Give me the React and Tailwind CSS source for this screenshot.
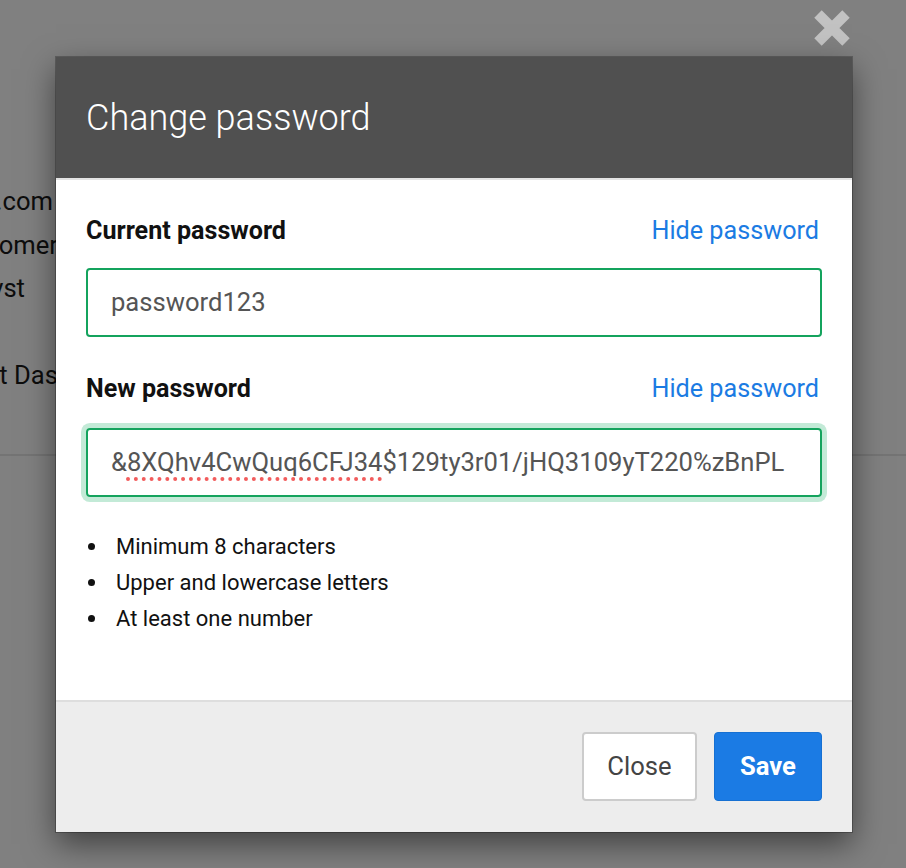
import React from "react";

const rules = ["Minimum 8 characters", "Upper and lowercase letters", "At least one number"];

const FieldLabel = ({ children }) => (
  <div className="flex items-center justify-between h-[41px]">
    <span className="text-[25.1px] font-bold text-[#111]">{children}</span>
    <span className="text-[25.2px] text-[#1b7be3] mr-[3px]">Hide password</span>
  </div>
);

export default function App() {
  return (
    <div className="relative w-[906px] h-[868px] overflow-hidden bg-[#808080] font-[Roboto,sans-serif]">
      {/* page behind the overlay */}
      <div className="pt-[180px] text-[25.6px] leading-[43.5px] text-[#0d0d0d]">
        <div className="flex justify-end w-[53px] whitespace-nowrap">jordan@company.com</div>
        <div className="flex justify-end w-[58px] whitespace-nowrap">Customer</div>
        <div className="flex justify-end w-[25px] whitespace-nowrap">Analyst</div>
        <div className="h-[43.5px]" />
        <div className="flex justify-end w-[58px] whitespace-nowrap">Product Das</div>
      </div>
      <div className="mt-[56.5px] h-[2px] bg-[#747474]" />

      {/* close X */}
      <svg className="absolute left-[812px] top-[8px]" width="40" height="40" viewBox="0 0 40 40">
        <path d="M6 6 L34 34 M34 6 L6 34" stroke="#c2c2c2" strokeWidth="10.5" strokeLinecap="butt" />
      </svg>

      {/* modal */}
      <div className="absolute left-[56px] top-[57px] w-[796px] bg-white shadow-[0_0_0_1px_rgba(0,0,0,0.25),0_12px_30px_rgba(0,0,0,0.5)]">
        <div className="h-[121px] bg-[#505050] px-[30px] flex items-center">
          <h1 className="text-[36px] font-light text-white">Change password</h1>
        </div>
        <div className="h-[2px] bg-[#e3e3e3]" />

        <div className="px-[30px] pt-[30px] pb-[64px]">
          <FieldLabel>Current password</FieldLabel>
          <div className="mt-[17px] h-[69px] border-2 border-[#14a35d] rounded-[4px] px-[23px] flex items-center text-[25.6px] text-[#555]">
            password123
          </div>

          <div className="mt-[31.5px]">
            <FieldLabel>New password</FieldLabel>
          </div>
          <div className="mt-[18.5px] h-[69px] border-2 border-[#14a35d] rounded-[4px] px-[23px] flex items-center text-[25.6px] text-[#555] whitespace-nowrap shadow-[0_0_0_5px_#c3ead7]">
            &amp;
            <span className="underline decoration-dotted decoration-[#f25c5c] decoration-[4px] underline-offset-[6px]">8XQhv4CwQuq6CFJ34</span>
            $129ty3r01/jHQ3109yT220%zBnPL
          </div>

          <ul className="mt-[31px]">
            {rules.map((r) => (
              <li key={r} className="flex items-center h-[36px] text-[22px] text-[#111]">
                <span className="ml-[2px] w-[7px] h-[7px] rounded-full bg-[#111]" />
                <span className="ml-[21px]">{r}</span>
              </li>
            ))}
          </ul>
        </div>

        <div className="border-t-2 border-[#dedede] bg-[#ededed] pt-[30px] pb-[31px] px-[30px] flex justify-end gap-[17px]">
          <button className="w-[115px] h-[69px] bg-white border-2 border-[#cccccc] rounded-[4px] text-[25.6px] text-[#444]">
            Close
          </button>
          <button className="w-[108px] h-[69px] bg-[#1b7be4] border border-[#1670d2] rounded-[4px] text-[25.6px] font-bold text-white">
            Save
          </button>
        </div>
      </div>
    </div>
  );
}
